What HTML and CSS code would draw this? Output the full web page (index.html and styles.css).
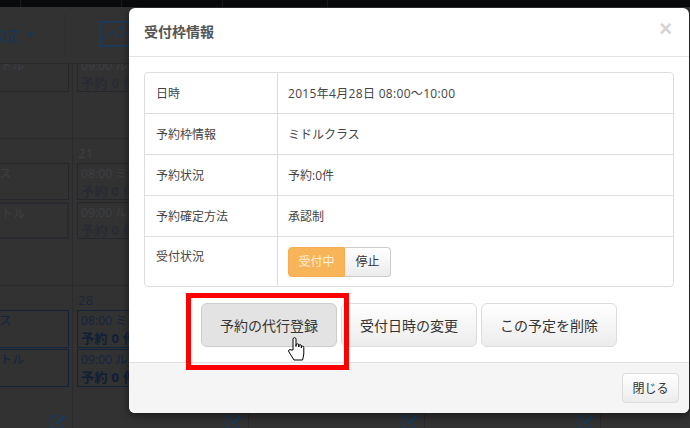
FILE: index.html
```html
<!DOCTYPE html>
<html lang="ja">
<head>
<meta charset="utf-8">
<title>受付枠情報</title>
<link rel="stylesheet" href="styles.css">
</head>
<body>
<div class="page">
  <div class="topbar"><span class="nav n1"></span><span class="nav n2"></span><span class="nav n3"></span><span class="nav n4"></span></div>
  <div class="toolbar">
    <div class="tool-a"><span class="tool-label">設定</span><span class="caret"></span></div>
    <div class="tool-b">
      <svg class="pic" width="40" height="26" viewBox="0 0 40 26"><rect x="1" y="1" width="38" height="24" fill="none" stroke="#1b3a58" stroke-width="2"/><path d="M3 19 L13 10 L20 16 L26 12 L37 21" fill="none" stroke="#1b3a58" stroke-width="1.2"/><circle cx="23" cy="7" r="2" fill="#1b3a58"/></svg>
    </div>
  </div>
  <div class="calendar">
    <div class="week first">
      <div class="day">
        <div class="date">&nbsp;</div>
        <div class="slot dim"><div class="t">08:00 ミドルクラス</div><div class="b">予約 0 件</div></div>
        <div class="slot dim"><div class="t">09:00 ルーキーバトル</div><div class="b">予約 0 件</div></div>
      </div>
      <div class="day">
        <div class="date">14</div>
        <div class="slot dim"><div class="t">08:00 ミドルクラス</div><div class="b">予約 0 件</div></div>
        <div class="slot dim"><div class="t">09:00 ルーキーバトル</div><div class="b">予約 0 件</div></div>
      </div>
    </div>
    <div class="week">
      <div class="day dimday">
        <div class="date">&nbsp;</div>
        <div class="slot dim"><div class="t">08:00 ミドルクラス</div><div class="b">予約 0 件</div></div>
        <div class="slot dim thick"><div class="t">09:00 ルーキーバトル</div><div class="b">予約 0 件</div></div>
      </div>
      <div class="day dimday">
        <div class="date">21</div>
        <div class="slot dim"><div class="t">08:00 ミドルクラス</div><div class="b">予約 0 件</div></div>
        <div class="slot dim"><div class="t">09:00 ルーキーバトル</div><div class="b">予約 0 件</div></div>
      </div>
    </div>
    <div class="week">
      <div class="day">
        <div class="date">&nbsp;</div>
        <div class="slot"><div class="t">08:00 ミドルクラス</div><div class="b">予約 0 件</div></div>
        <div class="slot"><div class="t">09:00 ルーキーバトル</div><div class="b">予約 0 件</div></div>
        <div class="edit"><svg width="17" height="15" viewBox="0 0 17 15"><path d="M9 2 H2 a1 1 0 0 0 -1 1 V13 a1 1 0 0 0 1 1 H11 a1 1 0 0 0 1 -1 V9" fill="none" stroke="#1b3a58" stroke-width="1.4"/><path d="M5 11 L6 8 L13 1 L15.5 3 L8 10 Z" fill="#1b3a58"/></svg></div>
      </div>
      <div class="day">
        <div class="date">28</div>
        <div class="slot"><div class="t">08:00 ミドルクラス</div><div class="b">予約 0 件</div></div>
        <div class="slot"><div class="t">09:00 ルーキーバトル</div><div class="b">予約 0 件</div></div>
        <div class="edit"><svg width="17" height="15" viewBox="0 0 17 15"><path d="M9 2 H2 a1 1 0 0 0 -1 1 V13 a1 1 0 0 0 1 1 H11 a1 1 0 0 0 1 -1 V9" fill="none" stroke="#1b3a58" stroke-width="1.4"/><path d="M5 11 L6 8 L13 1 L15.5 3 L8 10 Z" fill="#1b3a58"/></svg></div>
      </div>
      <div class="day">
        <div class="edit low"><svg width="17" height="15" viewBox="0 0 17 15"><path d="M9 2 H2 a1 1 0 0 0 -1 1 V13 a1 1 0 0 0 1 1 H11 a1 1 0 0 0 1 -1 V9" fill="none" stroke="#1b3a58" stroke-width="1.4"/><path d="M5 11 L6 8 L13 1 L15.5 3 L8 10 Z" fill="#1b3a58"/></svg></div>
      </div>
      <div class="day">
        <div class="edit low"><svg width="17" height="15" viewBox="0 0 17 15"><path d="M9 2 H2 a1 1 0 0 0 -1 1 V13 a1 1 0 0 0 1 1 H11 a1 1 0 0 0 1 -1 V9" fill="none" stroke="#1b3a58" stroke-width="1.4"/><path d="M5 11 L6 8 L13 1 L15.5 3 L8 10 Z" fill="#1b3a58"/></svg></div>
      </div>
    </div>
  </div>

  <div class="modal">
    <div class="modal-header">
      <h4 class="modal-title">受付枠情報</h4>
      <span class="close">×</span>
    </div>
    <div class="modal-body">
      <div class="table-wrap">
        <table class="info">
          <tr><th>日時</th><td class="when">2015年4月28日 08:00〜10:00</td></tr>
          <tr><th>予約枠情報</th><td>ミドルクラス</td></tr>
          <tr><th>予約状況</th><td>予約:0件</td></tr>
          <tr><th>予約確定方法</th><td>承認制</td></tr>
          <tr class="last"><th>受付状況</th><td><div class="group"><span class="seg on">受付中</span><span class="seg off">停止</span></div></td></tr>
        </table>
      </div>
      <div class="actions">
        <button class="btn active">予約の代行登録</button>
        <button class="btn">受付日時の変更</button>
        <button class="btn">この予定を削除</button>
      </div>
    </div>
    <div class="modal-footer"><button class="btn-close">閉じる</button></div>
  </div>

  <div class="highlight"></div>
  <svg class="hand" width="18" height="24" viewBox="0 0 18 24"><path d="M5 13 V2.2 a1.5 1.5 0 0 1 3 0 V9.5 V8.2 a1.4 1.4 0 0 1 2.8 0 V10 V9 a1.3 1.3 0 0 1 2.6 0 V11 V10.4 a1.2 1.2 0 0 1 2.4 0 V17 L14.6 23 H6 L1 15 a1.4 1.4 0 0 1 2 -2 Z" fill="#fff" stroke="#000" stroke-width="1" stroke-linejoin="round"/></svg>
</div>
</body>
</html>
```
FILE: styles.css
```css
* { box-sizing: border-box; }
html, body { margin: 0; padding: 0; overflow: hidden; }
body {
  background: #323232;
  font-family: "Open Sans", "Noto Sans CJK JP", sans-serif;
  color: #333;
}
.page { position: relative; width: 690px; height: 428px; overflow: hidden; background: #323232; }

.topbar { display: flex; height: 7px; background: #090a0c; }
.nav { border-right: 1px solid #1a1a1c; }
.n1 { width: 21px; }
.n2 { width: 101px; }
.n3 { width: 101px; }
.n4 { width: 105px; }

.toolbar { display: flex; height: 57px; border-bottom: 1px solid #2b2b2b; }
.tool-a { width: 66px; display: flex; align-items: center; gap: 7px; border-right: 1px solid #2d2d2d; margin: 6px 0; font-size: 14px; color: #163658; }
.tool-label { margin-left: -8px; }
.caret { width: 0; height: 0; border-left: 4px solid transparent; border-right: 4px solid transparent; border-top: 4px solid #163658; }
.tool-b { padding: 14px 0 0 33px; }
.pic { display: block; }

.calendar { height: 364px; overflow: hidden; }
.week { display: flex; height: 147px; margin-left: -103px; border-bottom: 1px solid #2b2b2b; }
.week.first { margin-top: -72px; }
.day { flex: 0 0 176px; position: relative; padding: 0 3px 0 4px; border-right: 1px solid #2b2b2b; }
.date { height: 24px; padding: 6px 0 0 1px; font-size: 13px; line-height: 16px; color: #1c2636; letter-spacing: .4px; }
.dimday .date { color: #3f4042; }

.slot { height: 38px; margin-bottom: 1px; padding: 1px 3px; border: 1px solid #13233c; overflow: hidden; white-space: nowrap; }
.slot .t { font-size: 12px; line-height: 18px; color: #13243f; letter-spacing: .1px; }
.slot .b { font-size: 13px; line-height: 16px; font-weight: 700; color: #101e38; letter-spacing: .4px; }
.slot.dim { height: 37px; margin-bottom: 2px; border-color: #25272c; }
.slot.dim .t { color: #3d3f44; }
.slot.dim .b { color: #282b33; }
.slot.thick { border: 2px solid #29292f; }
.edit { position: absolute; top: 128px; right: 5px; line-height: 0; }

.modal {
  position: absolute; top: 8px; left: 129px; width: 560px; height: 405px;
  background: #fff; border-radius: 6px; overflow: hidden;
  display: flex; flex-direction: column;
  box-shadow: 0 3px 9px rgba(0,0,0,.5);
}
.modal-header { position: relative; height: 49px; padding: 0 15px; border-bottom: 1px solid #e5e5e5; display: flex; align-items: center; flex: none; }
.modal-title { margin: 0; font-size: 14px; font-weight: 700; color: #555; line-height: 46px; }
.close { position: absolute; top: 9px; right: 17px; font-family: "Liberation Sans", sans-serif; font-size: 22px; line-height: 24px; font-weight: 700; color: #d4d4d4; }

.modal-body { flex: 1; padding: 15px 15px 0; }
.table-wrap { border: 1px solid #ddd; border-radius: 4px; overflow: hidden; }
.info { width: 100%; border-collapse: separate; border-spacing: 0; font-size: 12px; color: #444; }
.info tr { height: 41px; }
.info tr:first-child { height: 40px; }
.info th, .info td { padding: 0 10px 0 11px; text-align: left; font-weight: 400; border-top: 1px solid #ddd; vertical-align: middle; line-height: 17px; }
.info td { padding-left: 10px; }
.info tr:first-child th, .info tr:first-child td { border-top: 0; height: 40px; }
.info th { width: 133px; border-right: 1px solid #ddd; }
.info .when { letter-spacing: .32px; }
.info .last th { vertical-align: top; padding-top: 11px; height: 50px; }
.info .last td { vertical-align: top; padding-top: 10px; padding-bottom: 9px; }

.group { display: inline-flex; height: 30px; font-size: 12px; line-height: 28px; }
.seg { display: block; border: 1px solid #ccc; text-align: center; }
.seg.on { width: 57px; background: #f8b458; border-color: #f5ae52; color: #fdf0dc; border-radius: 4px 0 0 4px; }
.seg.off { width: 46px; border-left: 0; background: linear-gradient(#fff, #ececec); color: #333; border-radius: 0 4px 4px 0; }

.actions { display: flex; justify-content: center; gap: 4px; margin-top: 16px; }
.btn {
  width: 136px; height: 44px; padding: 0; font: inherit; font-size: 14px; color: #333;
  background: linear-gradient(#fff, #ececec); border: 1px solid #dcdcdc; border-radius: 6px;
}
.btn.active { background: #e3e3e3; border-color: #ccc; }

.modal-footer { flex: none; height: 51px; padding: 10px 10px 0; background: #f5f5f5; border-top: 1px solid #e0e0e0; display: flex; justify-content: flex-end; }
.btn-close {
  width: 57px; height: 30px; padding: 0; font: inherit; font-size: 12px; color: #333;
  background: linear-gradient(#fff, #ececec); border: 1px solid #dcdcdc; border-radius: 4px;
}

.highlight { position: absolute; left: 186px; top: 293px; width: 163px; height: 77px; border: 5px solid #f00; }
.hand { position: absolute; left: 288px; top: 337px; }
```
